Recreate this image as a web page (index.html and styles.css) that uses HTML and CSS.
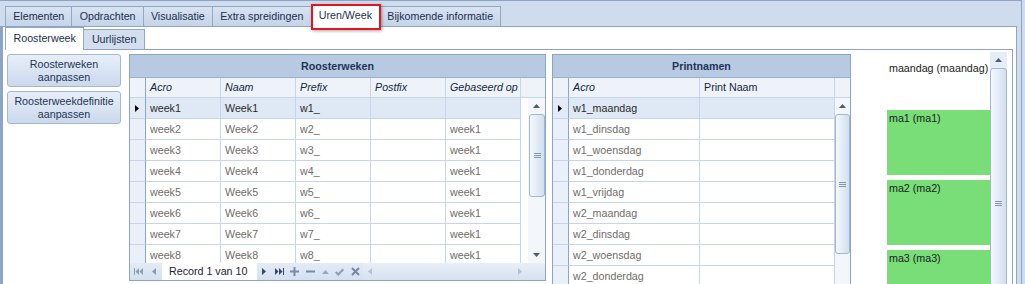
FILE: index.html
```html
<!DOCTYPE html>
<html>
<head>
<meta charset="utf-8">
<title>Uren/Week</title>
<link rel="stylesheet" href="styles.css">
</head>
<body>
<div class="window">
  <div class="tabstrip">
    <div class="tab">Elementen</div>
    <div class="tab">Opdrachten</div>
    <div class="tab">Visualisatie</div>
    <div class="tab">Extra spreidingen</div>
    <div class="tab active">Uren/Week<span class="highlight"></span></div>
    <div class="tab">Bijkomende informatie</div>
  </div>
  <div class="page">
    <div class="subtabs">
      <div class="subtab active">Roosterweek</div>
      <div class="subtab">Uurlijsten</div>
    </div>
    <div class="subpage">
      <div class="actions">
        <button class="btn">Roosterweken<br>aanpassen</button>
        <button class="btn">Roosterweekdefinitie<br>aanpassen</button>
      </div>

      <div class="grid weeks">
        <div class="caption">Roosterweken</div>
        <div class="colheads">
          <div class="cell ind"></div>
          <div class="cell it">Acro</div>
          <div class="cell it">Naam</div>
          <div class="cell it">Prefix</div>
          <div class="cell it">Postfix</div>
          <div class="cell it">Gebaseerd op</div>
          <div class="cell filler"></div>
        </div>
        <div class="gbody">
          <div class="rows">
            <div class="row sel"><div class="cell ind"><svg class="ptr" width="5" height="7" viewBox="0 0 5 7"><polygon points="0,0 4,3.5 0,7" fill="#000"/></svg></div><div class="cell">week1</div><div class="cell">Week1</div><div class="cell">w1_</div><div class="cell"></div><div class="cell"></div></div>
            <div class="row"><div class="cell ind"></div><div class="cell">week2</div><div class="cell">Week2</div><div class="cell">w2_</div><div class="cell"></div><div class="cell">week1</div></div>
            <div class="row"><div class="cell ind"></div><div class="cell">week3</div><div class="cell">Week3</div><div class="cell">w3_</div><div class="cell"></div><div class="cell">week1</div></div>
            <div class="row"><div class="cell ind"></div><div class="cell">week4</div><div class="cell">Week4</div><div class="cell">w4_</div><div class="cell"></div><div class="cell">week1</div></div>
            <div class="row"><div class="cell ind"></div><div class="cell">week5</div><div class="cell">Week5</div><div class="cell">w5_</div><div class="cell"></div><div class="cell">week1</div></div>
            <div class="row"><div class="cell ind"></div><div class="cell">week6</div><div class="cell">Week6</div><div class="cell">w6_</div><div class="cell"></div><div class="cell">week1</div></div>
            <div class="row"><div class="cell ind"></div><div class="cell">week7</div><div class="cell">Week7</div><div class="cell">w7_</div><div class="cell"></div><div class="cell">week1</div></div>
            <div class="row"><div class="cell ind"></div><div class="cell">week8</div><div class="cell">Week8</div><div class="cell">w8_</div><div class="cell"></div><div class="cell">week1</div></div>
          </div>
          <div class="vscroll vs-weeks">
            <div class="arrow"><svg width="7" height="4" viewBox="0 0 7 4"><polygon points="0,4 3.5,0 7,4" fill="#4d5c78"/></svg></div>
            <div class="thumb t-weeks"><span class="grip"></span></div>
            <div class="track"></div>
            <div class="arrow"><svg width="7" height="4" viewBox="0 0 7 4"><polygon points="0,0 3.5,4 7,0" fill="#4d5c78"/></svg></div>
          </div>
        </div>
        <div class="navigator">
          <span class="nb w16"><svg width="9" height="7" viewBox="0 0 9 7"><rect x="0" y="0" width="1" height="7" fill="#8a9ab3"/><polygon points="5,0 1.5,3.5 5,7" fill="#8a9ab3"/><polygon points="9,0 5.5,3.5 9,7" fill="#8a9ab3"/></svg></span>
          <span class="nb w16"><svg width="4" height="7" viewBox="0 0 4 7"><polygon points="4,0 0,3.5 4,7" fill="#8a9ab3"/></svg></span>
          <span class="record">Record 1 van 10</span>
          <span class="nb w14"><svg width="4" height="7" viewBox="0 0 4 7"><polygon points="0,0 4,3.5 0,7" fill="#34466a"/></svg></span>
          <span class="nb w16"><svg width="9" height="7" viewBox="0 0 9 7"><polygon points="0,0 3.5,3.5 0,7" fill="#34466a"/><polygon points="4,0 7.5,3.5 4,7" fill="#34466a"/><rect x="8" y="0" width="1" height="7" fill="#34466a"/></svg></span>
          <span class="nb w15"><svg width="9" height="9" viewBox="0 0 9 9"><rect x="0" y="3.5" width="9" height="2" fill="#7b8aa3"/><rect x="3.5" y="0" width="2" height="9" fill="#7b8aa3"/></svg></span>
          <span class="nb w16"><svg width="9" height="9" viewBox="0 0 9 9"><rect x="0" y="3.5" width="9" height="2" fill="#7b8aa3"/></svg></span>
          <span class="nb w14"><svg width="7" height="4" viewBox="0 0 7 4"><polygon points="0,4 3.5,0 7,4" fill="#9aa7bb"/></svg></span>
          <span class="nb w15"><svg width="9" height="8" viewBox="0 0 9 8"><polyline points="0.8,4 3.3,6.5 8.3,1.2" fill="none" stroke="#8f9cb2" stroke-width="2"/></svg></span>
          <span class="nb w16"><svg width="9" height="9" viewBox="0 0 9 9"><path d="M1 1 L8 8 M8 1 L1 8" stroke="#7a879e" stroke-width="2"/></svg></span>
          <span class="hscroll">
            <svg width="4" height="7" viewBox="0 0 4 7"><polygon points="4,0 0,3.5 4,7" fill="#b5c1d2"/></svg>
            <svg width="4" height="7" viewBox="0 0 4 7"><polygon points="0,0 4,3.5 0,7" fill="#b5c1d2"/></svg>
          </span>
        </div>
      </div>

      <div class="grid names">
        <div class="caption">Printnamen</div>
        <div class="colheads">
          <div class="cell ind"></div>
          <div class="cell it">Acro</div>
          <div class="cell">Print Naam</div>
          <div class="cell filler"></div>
        </div>
        <div class="gbody">
          <div class="rows">
            <div class="row sel"><div class="cell ind"><svg class="ptr" width="5" height="7" viewBox="0 0 5 7"><polygon points="0,0 4,3.5 0,7" fill="#000"/></svg></div><div class="cell">w1_maandag</div><div class="cell"></div></div>
            <div class="row"><div class="cell ind"></div><div class="cell">w1_dinsdag</div><div class="cell"></div></div>
            <div class="row"><div class="cell ind"></div><div class="cell">w1_woensdag</div><div class="cell"></div></div>
            <div class="row"><div class="cell ind"></div><div class="cell">w1_donderdag</div><div class="cell"></div></div>
            <div class="row"><div class="cell ind"></div><div class="cell">w1_vrijdag</div><div class="cell"></div></div>
            <div class="row"><div class="cell ind"></div><div class="cell">w2_maandag</div><div class="cell"></div></div>
            <div class="row"><div class="cell ind"></div><div class="cell">w2_dinsdag</div><div class="cell"></div></div>
            <div class="row"><div class="cell ind"></div><div class="cell">w2_woensdag</div><div class="cell"></div></div>
            <div class="row"><div class="cell ind"></div><div class="cell">w2_donderdag</div><div class="cell"></div></div>
          </div>
          <div class="vscroll vs-names">
            <div class="arrow"><svg width="7" height="4" viewBox="0 0 7 4"><polygon points="0,4 3.5,0 7,4" fill="#4d5c78"/></svg></div>
            <div class="thumb t-names"><span class="grip"></span></div>
            <div class="track"></div>
          </div>
        </div>
      </div>

      <div class="days">
        <div class="daycol">
          <div class="dayhead">maandag (maandag)</div>
          <div class="slot">ma1 (ma1)</div>
          <div class="slot">ma2 (ma2)</div>
          <div class="slot">ma3 (ma3)</div>
        </div>
        <div class="vscroll vs-days">
          <div class="arrow"><svg width="7" height="4" viewBox="0 0 7 4"><polygon points="0,4 3.5,0 7,4" fill="#4d5c78"/></svg></div>
          <div class="thumb t-days"><span class="grip"></span></div>
        </div>
      </div>
    </div>
  </div>
</div>
</body>
</html>
```
FILE: styles.css
```css
html, body {
  margin: 0;
  padding: 0;
}
body {
  background: #cfdcee;
  font-family: "Liberation Sans", Arial, sans-serif;
  font-size: 10.7px;
  color: #1b2f4f;
}
.window {
  width: 1022px;
  height: 284px;
  box-sizing: border-box;
  border-top: 1px solid #8ea4c4;
  border-right: 1px solid #8ea4c4;
  padding-right: 4px;
  display: flex;
  flex-direction: column;
  overflow: hidden;
  background: #cfdcee;
}

/* main tabs */
.tabstrip {
  flex: none;
  height: 25px;
  display: flex;
  align-items: flex-end;
  padding-left: 5px;
}
.tab {
  height: 20px;
  box-sizing: border-box;
  border: 1px solid #92a8c7;
  border-bottom: none;
  margin-right: -1px;
  padding: 0 7.2px;
  line-height: 18px;
  background: linear-gradient(#d8e3f2, #c5d4e9);
  color: #1b2f4f;
  white-space: nowrap;
}
.tab.active {
  position: relative;
  z-index: 2;
  height: 23px;
  margin-bottom: -1px;
  background: #fff;
  line-height: 21px;
}
.highlight {
  position: absolute;
  left: -1px;
  right: -2px;
  top: -1px;
  bottom: -3px;
  border: 2px solid #e3161c;
  box-shadow: 1px 1px 3px rgba(0, 0, 0, 0.35);
  pointer-events: none;
}

/* page */
.page {
  flex: 1;
  min-height: 0;
  background: #fff;
  border-top: 1px solid #8ea4c4;
  border-left: 3px solid #8ea4c4;
  border-right: 1px solid #8ea4c4;
  display: flex;
  flex-direction: column;
}
.subtabs {
  flex: none;
  height: 22px;
  display: flex;
  align-items: flex-end;
  padding-left: 2px;
}
.subtab {
  height: 20px;
  box-sizing: border-box;
  border: 1px solid #92a8c7;
  border-bottom: none;
  margin-right: -1px;
  padding: 0 7.5px;
  line-height: 19px;
  background: #d3dfef;
  white-space: nowrap;
}
.subtab.active {
  position: relative;
  z-index: 1;
  height: 23px;
  margin-bottom: -1px;
  background: #fff;
  line-height: 21px;
}
.subpage {
  flex: 1;
  min-height: 0;
  margin: 0 3px 0 2px;
  border-top: 1px solid #8ea4c4;
  border-right: 1px solid #8ea4c4;
  padding: 4px 0 0 2px;
  display: flex;
  align-items: flex-start;
}

/* buttons */
.actions {
  flex: none;
  width: 114px;
  margin-right: 8px;
  display: flex;
  flex-direction: column;
  gap: 4px;
}
.btn {
  height: 33px;
  width: 100%;
  padding: 0;
  border: 1px solid #a5b8d3;
  border-radius: 3px;
  background: linear-gradient(#e7eef8, #cbd9ed);
  font: inherit;
  color: #1e3556;
  line-height: 12.5px;
  text-align: center;
}

/* grids */
.grid {
  flex: none;
  box-sizing: border-box;
  border: 1px solid #8ea4c4;
  background: #fff;
  display: flex;
  flex-direction: column;
}
.weeks {
  width: 417px;
  height: 227px;
  margin-right: 6px;
}
.names {
  width: 299px;
  height: 260px;
}
.caption {
  flex: none;
  height: 22px;
  line-height: 22px;
  background: #b8cae2;
  border-bottom: 1px solid #9bb0ce;
  text-align: center;
  font-weight: bold;
  color: #1d3558;
}
.colheads {
  flex: none;
  display: grid;
  height: 20px;
  background: #eef3fa;
  color: #15263d;
}
.weeks .colheads { grid-template-columns: 16px 75px 75px 75px 75px 75px 1fr; }
.weeks .row { grid-template-columns: 16px 75px 75px 75px 75px 75px; }
.names .colheads { grid-template-columns: 16px 131px 135px 1fr; }
.names .row { grid-template-columns: 16px 131px 135px; }

.cell {
  box-sizing: border-box;
  border-right: 1px solid #c5d5eb;
  border-bottom: 1px solid #c5d5eb;
  padding-left: 4px;
  line-height: 19px;
  white-space: nowrap;
  overflow: hidden;
}
.colheads .cell { line-height: 19px; }
.colheads .filler { border-right: none; }
.it { font-style: italic; }
.ind {
  padding: 0;
  background: #e9f0f9;
  border-right-color: #8ea4c4;
  display: flex;
  align-items: center;
}
.colheads .ind { background: #eef3fa; }
.ptr { margin-left: 5px; }

.gbody {
  flex: 1;
  min-height: 0;
  display: flex;
  overflow: hidden;
}
.rows { flex: none; }
.weeks .rows { width: 391px; }
.names .rows { width: 282px; }
.row {
  display: grid;
  height: 21px;
  color: #706c68;
}
.row .cell { line-height: 20px; }
.row.sel { color: #2a2a2a; }
.row.sel .cell { background: #dfe9f5; }
.row.sel .ind { background: #e2ebf6; }

/* scrollbars */
.vscroll {
  flex: none;
  display: flex;
  flex-direction: column;
  align-items: center;
  background: #f3f6fb;
}
.arrow {
  flex: none;
  height: 16px;
  width: 100%;
  display: flex;
  align-items: center;
  justify-content: center;
}
.thumb {
  flex: none;
  box-sizing: border-box;
  border: 1px solid #a3b5cf;
  border-radius: 3px;
  background: linear-gradient(to right, #f5f8fc, #d2deef);
  display: flex;
  align-items: center;
  justify-content: center;
}
.track { flex: 1; }
.grip {
  width: 7px;
  height: 5px;
  background: repeating-linear-gradient(#8396b3 0 1px, transparent 1px 2px);
}
.vs-weeks {
  width: 17px;
  margin-left: auto;
}
.t-weeks { width: 16px; height: 83px; margin-left: 1px; }
.vs-names { width: 15px; }
.t-names { width: 15px; height: 140px; }

/* navigator */
.navigator {
  flex: none;
  height: 17px;
  display: flex;
  align-items: stretch;
  background: linear-gradient(#e4ebf6, #d4e0f0);
}
.nb {
  flex: none;
  display: flex;
  align-items: center;
  justify-content: center;
}
.w14 { width: 14px; }
.w15 { width: 15px; }
.w16 { width: 16px; }
.record {
  flex: none;
  width: 95px;
  box-sizing: border-box;
  padding-left: 7px;
  background: #fff;
  color: #1b2233;
  line-height: 17px;
  white-space: nowrap;
}
.hscroll {
  flex: 1;
  display: flex;
  align-items: center;
  justify-content: space-between;
  padding: 0 23px 0 5px;
  background: linear-gradient(#e9eff8, #d6e1f0);
}

/* days panel */
.days {
  flex: 1;
  align-self: stretch;
  display: flex;
  min-width: 0;
}
.daycol {
  flex: 1;
  padding-left: 36px;
  color: #1a1a1a;
}
.dayhead {
  height: 56px;
  box-sizing: border-box;
  padding: 8px 0 0 2px;
  line-height: 13px;
  white-space: nowrap;
}
.slot {
  height: 65px;
  margin-bottom: 5px;
  box-sizing: border-box;
  padding: 2px 0 0 2px;
  background: #79dd78;
  line-height: 13px;
  color: #15251a;
}
.vs-days {
  width: 17px;
  margin: -2px 5px 0 0;
  background: #e6edf6;
}
.t-days { width: 17px; height: 270px; }
```
